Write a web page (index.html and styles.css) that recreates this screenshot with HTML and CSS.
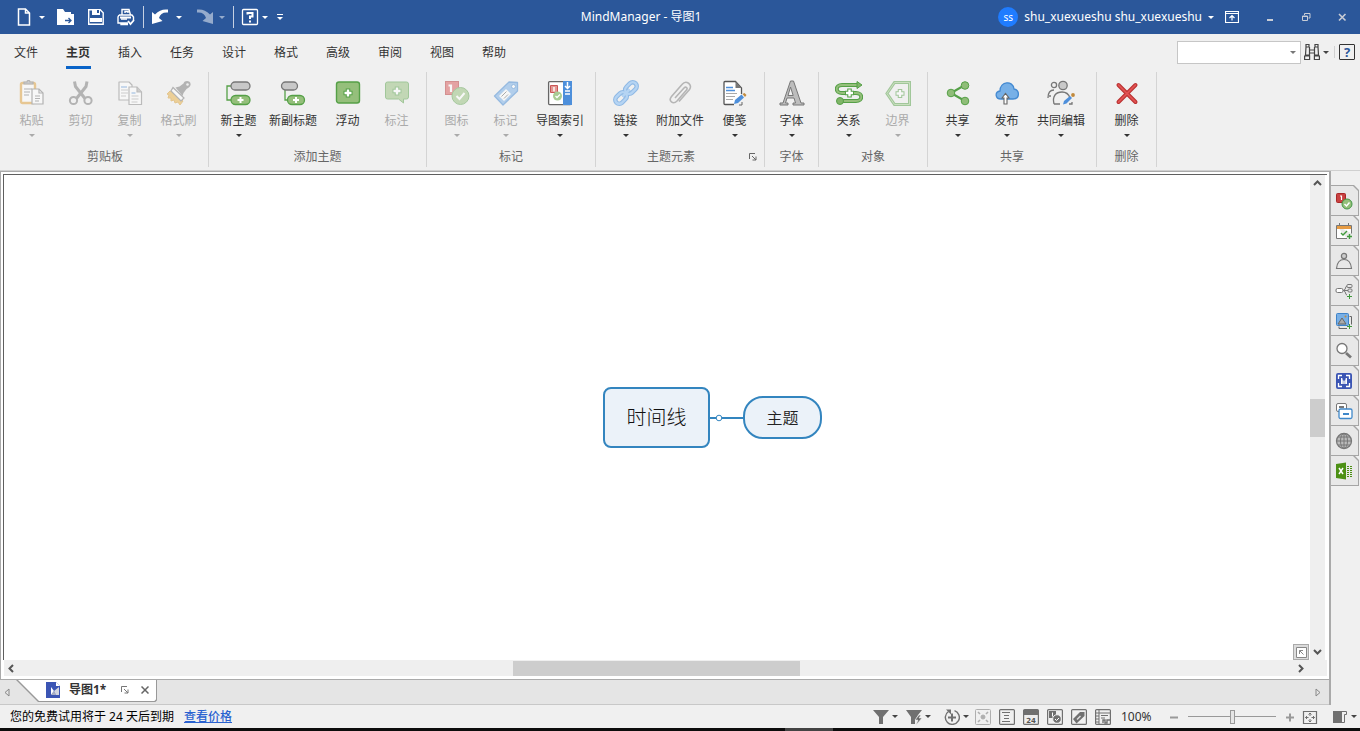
FILE: index.html
```html
<!DOCTYPE html>
<html lang="zh-CN">
<head>
<meta charset="utf-8">
<title>MindManager - 导图1</title>
<link rel="stylesheet" href="styles.css">
</head>
<body>
<header class="titlebar">
  <div class="quick">
    <button class="qbtn" aria-label="新建"><svg width="14" height="18" viewBox="0 0 14 18" fill="none" stroke="#fff" stroke-width="1.5"><path d="M1.500 1h7l4 4v12h-11zM8.500 1v4h4"/></svg><i class="caret"></i></button>
    <button class="qbtn" aria-label="打开"><svg width="18" height="18" viewBox="0 0 18 18"><path fill="#fff" d="M0 1h6l2 3h6v3H0z"/><path d="M0 6h17v11H0z" fill="#fff"/><path d="M8 12.500h6M11.500 10l2.500 2.500-2.500 2.500" fill="none" stroke="#2b579a" stroke-width="1.300"/></svg></button>
    <button class="qbtn" aria-label="保存"><svg width="18" height="18" viewBox="0 0 18 18"><path d="M1.700 1.700h11.500l3 3v11.500H1.700z" fill="none" stroke="#fff" stroke-width="1.400"/><path fill="#fff" d="M5 2h8v5H5zM3 10h12v4H3z"/><path fill="#2b579a" d="M10 2h2v3h-2z"/></svg></button>
    <button class="qbtn" aria-label="打印"><svg width="18" height="18" viewBox="0 0 18 18" fill="none" stroke="#fff" stroke-width="1.400"><path d="M5 7V1.500h7L13.500 7M8 5V3.500h3V5M2 7h13l1.500 2v3M2 7L1 9v6h10M4 11h6M4 15v1.500h7"/><path d="M3 9.500h11M11 13l2.500 3 3.500-4" stroke-width="1.800"/></svg></button>
    <span class="qsep"></span>
    <button class="qbtn q-step" aria-label="撤消"><svg width="20" height="18" viewBox="0 0 20 18"><path fill="#fff" d="M1 4l3 2.500C8 2 12 1 17 1.500v3C12 4 9 6 8 10l3.500 3L1 16z"/></svg><i class="caret"></i></button>
    <button class="qbtn q-step q-redo" aria-label="恢复" disabled><svg width="20" height="18" viewBox="0 0 20 18"><path fill="#fff" d="M19 4l-3 2.500C12 2 8 1 3 1.500v3C8 4 11 6 12 10l-3.500 3L19 16z"/></svg><i class="caret"></i></button>
    <span class="qsep"></span>
    <button class="qbtn q-help" aria-label="帮助"><svg width="18" height="18" viewBox="0 0 18 18" fill="none" stroke="#fff"><rect x="1.500" y="1.500" width="15" height="15" rx="1" stroke-width="1.300"/><path d="M6.500 6.500V5h5v3.500H9V11" stroke-width="2"/><path d="M8 12.500h2v2H8z" fill="#fff" stroke="none"/></svg><i class="caret"></i></button>
    <button class="qbtn q-more" aria-label="自定义"><span class="bar"></span><i class="caret"></i></button>
  </div>
  <div class="apptitle">MindManager - 导图1</div>
  <div class="account">
    <button class="user"><span class="avatar">ss</span><span>shu_xuexueshu shu_xuexueshu</span><i class="caret"></i></button>
    <button class="winbtn bright" aria-label="功能区选项"><svg width="14" height="12" viewBox="0 0 14 12" fill="none" stroke="#fff"><path d="M.5.5h13v11H.5zM.5 2.500h13M7 9.500V5M4.500 7L7 4.500 9.500 7" stroke-width="1.200"/></svg></button>
    <button class="winbtn" aria-label="最小化"><svg width="10" height="10" viewBox="0 0 10 10"><path fill="#c9cdd6" d="M2 7h6v2H2z"/></svg></button>
    <button class="winbtn" aria-label="还原"><svg width="10" height="10" viewBox="0 0 10 10" fill="none" stroke="#c9cdd6"><path d="M1.500 4h5v4.500h-5zM1 4.500h6M3.500 3V1.500H9V6H7.500"/></svg></button>
    <button class="winbtn" aria-label="关闭"><svg width="10" height="10" viewBox="0 0 10 10" stroke="#c9cdd6" stroke-width="1.600"><path d="M2 2l6.500 6.500M8.500 2L2 8.500"/></svg></button>
  </div>
</header>

<nav class="menubar">
  <button class="mtab">文件</button><button class="mtab active">主页</button><button class="mtab">插入</button><button class="mtab">任务</button><button class="mtab">设计</button><button class="mtab">格式</button><button class="mtab">高级</button><button class="mtab">审阅</button><button class="mtab">视图</button><button class="mtab">帮助</button>
  <div class="find">
    <label class="findbox"><input type="text" aria-label="查找"><i class="caret"></i></label>
    <button class="findbtn" aria-label="查找"><svg width="16" height="18" viewBox="0 0 16 18" fill="none" stroke="#444" stroke-width="1.200"><path d="M2 1.500h3v2.500H2zM11 1.500h3v2.500h-3zM2 4l-.5 8h4V4M14 4l.5 8h-4V4M.6 13h5v3.500h-5zM10.400 13h5v3.500h-5zM5.500 7h5M5.500 10h5"/></svg><i class="caret"></i></button>
    <span class="fsep"></span>
    <button class="findhelp" aria-label="帮助">?</button>
  </div>
</nav>

<section class="ribbon">
  <div class="group">
    <div class="tools">
      <button class="tool" disabled><svg viewBox="0 0 26 26" fill="none" stroke="#777" stroke-width="1.200"><rect x="2" y="3" width="14" height="20" rx="1.500" fill="#fff" stroke="#e0a038" stroke-width="2.400"/><path d="M5 4V2h3c0-2 3-2 3 0h3v2z" fill="#aaa"/><path d="M5 9h8M5 12h6M5 15h5"/><path d="M13 9h7l4 4v11H13z" fill="#fff"/><path d="M20 9v4h4M16 16h5M16 18.500h5M16 21h4"/></svg><span>粘贴</span><i class="caret"></i></button>
      <button class="tool" disabled><svg viewBox="0 0 26 26" fill="none" stroke="#777"><path d="M6.500 1.500l1 5 9.500 12M19 1.500l-1 5L8.500 18.500" stroke-width="3"/><circle cx="5.500" cy="20.500" r="3.600" stroke-width="2"/><circle cx="20" cy="20.500" r="3.600" stroke-width="2"/></svg><span>剪切</span></button>
      <button class="tool" disabled><svg viewBox="0 0 26 26" fill="#fff" stroke="#888" stroke-width="1.200"><path d="M2 2h10l3 3v15H2z" stroke-linejoin="round"/><path d="M4 7h6" stroke="#5b95d8"/><path d="M4 10h7M4 13h7M4 16h5" stroke="#aaa"/><path d="M12 7h8l4.500 5v12.500H12z"/><path d="M20 7v5h4.500" fill="#aaa"/><path d="M14.500 13h4" stroke="#5b95d8"/><path d="M14.500 16h7M14.500 19h7M14.500 22h6" stroke="#aaa"/></svg><span>复制</span><i class="caret"></i></button>
      <button class="tool" disabled><svg viewBox="0 0 26 26"><path d="M4 11l-3 3 2 1-1 3 3 0 0 3 3-1 1 3 3-1 2 3 3-4z" fill="#e9b040" stroke="#d79b30"/><path d="M7 7.500L18 18l-3 3L5 11z" fill="#fff" stroke="#777" stroke-width="1.200"/><path d="M9.500 7.500l4-1 4-3c1-4 8-3 7 1.500-1 3-3 3-4 4l-3 4-1 3z" fill="#777"/><circle cx="21.500" cy="4.500" r="1.300" fill="#eee"/></svg><span>格式刷</span><i class="caret"></i></button>
    </div>
    <div class="gname">剪贴板</div>
  </div>
  <div class="group">
    <div class="tools">
      <button class="tool"><svg viewBox="0 0 26 26" fill="none" stroke-width="1.300"><path d="M5 6H1v14h5" stroke="#55a047"/><rect x="5" y="2" width="19" height="8" rx="4" fill="#c8c8c8" stroke="#777"/><rect x="5" y="15.500" width="19" height="9" rx="4.500" fill="#95bf7b" stroke="#55a047"/><path d="M14.500 17v6M11.500 20h6" stroke="#fff" stroke-width="2"/></svg><span>新主题</span><i class="caret"></i></button>
      <button class="tool wide"><svg viewBox="0 0 26 26" fill="none" stroke-width="1.300"><path d="M5 10v10h5" stroke="#55a047"/><rect x="1.500" y="2" width="16" height="8" rx="4" fill="#c8c8c8" stroke="#777"/><rect x="7.500" y="15.500" width="17" height="9" rx="4.500" fill="#95bf7b" stroke="#55a047"/><path d="M16 17v6M13 20h6" stroke="#fff" stroke-width="2"/></svg><span>新副标题</span></button>
      <button class="tool"><svg viewBox="0 0 26 26"><rect x="1.500" y="2" width="23" height="21" rx="2.500" fill="#95bf7b" stroke="#55a047" stroke-width="1.400"/><path d="M13 8.500v9M8.500 13h9" stroke="#55a047" stroke-width="4.500"/><path d="M13 9.500v7M9.500 13h7" stroke="#fff" stroke-width="2.400"/></svg><span>浮动</span></button>
      <button class="tool" disabled><svg viewBox="0 0 26 26"><path d="M3.500 2h19q2 0 2 2v13q0 2-2 2h-3v4l-5-4h-11q-2 0-2-2V4q0-2 2-2z" fill="#95bf7b" stroke="#55a047"/><path d="M13 6.500v9M8.500 11h9" stroke="#55a047" stroke-width="4.500"/><path d="M13 7.500v7M9.500 11h7" stroke="#fff" stroke-width="2.400"/></svg><span>标注</span></button>
    </div>
    <div class="gname">添加主题</div>
  </div>
  <div class="group">
    <div class="tools">
      <button class="tool" disabled><svg viewBox="0 0 26 26"><rect x="1.500" y="1.500" width="13" height="13" fill="#d95757" stroke="#b83232"/><path d="M4.500 5.500H7V12" stroke="#fff" stroke-width="2.200" fill="none"/><circle cx="16.500" cy="16" r="8.500" fill="#94c07a" stroke="#5ca04e"/><path d="M12.500 16l3 3 5-6" fill="none" stroke="#fff" stroke-width="2"/></svg><span>图标</span><i class="caret"></i></button>
      <button class="tool" disabled><svg viewBox="0 0 26 26"><path d="M1.500 16L16 2l8.500.5V11L10 25z" fill="#76aee8" stroke="#3f86d2" stroke-width="1.300" stroke-linejoin="round"/><path d="M6 16l7-7 5 5-7 7z" fill="#fff"/><path d="M8.500 16.500l5-5M11 18.500l4-4" stroke="#666"/><circle cx="20.500" cy="6.500" r="2" fill="#fff" stroke="#3f86d2"/></svg><span>标记</span><i class="caret"></i></button>
      <button class="tool wide"><svg viewBox="0 0 26 26"><rect x="1.600" y="1.600" width="22.500" height="23" rx="1" fill="#fff" stroke="#666" stroke-width="1.300"/><path fill="#4d8fdb" d="M16 1h9v24h-9z"/><path d="M20.500 2v6M18 6l2.500 2.500L23 6M18 11h5M18 14h5" stroke="#fff" stroke-width="1.500" fill="none"/><path fill="#e39793" stroke="#ca5555" d="M3.500 5.500h7v7h-7z"/><path d="M7 7v4.500" stroke="#fff" stroke-width="1.400"/><circle cx="10.500" cy="16" r="4.500" fill="#a8cc94"/><path d="M8.500 16l1.500 1.500 3-3" fill="none" stroke="#fff" stroke-width="1.300"/></svg><span>导图索引</span><i class="caret"></i></button>
    </div>
    <div class="gname">标记</div>
  </div>
  <div class="group">
    <div class="tools">
      <button class="tool"><svg viewBox="0 0 26 26" fill="none"><g transform="rotate(-45 13 13)" stroke="#8fb9e5" stroke-width="4.500"><rect x="-.5" y="9" width="13" height="8" rx="4"/><rect x="13.500" y="9" width="13" height="8" rx="4"/><path d="M8 13h10" stroke-width="3.500"/></g><g transform="rotate(-45 13 13)" stroke="#b5d4f3" stroke-width="2.400"><rect x="-.5" y="9" width="13" height="8" rx="4"/><rect x="13.500" y="9" width="13" height="8" rx="4"/><path d="M8 13h10"/></g></svg><span>链接</span><i class="caret"></i></button>
      <button class="tool wide"><svg viewBox="0 0 26 26" fill="none" stroke="#b5b5b5" stroke-width="1.600"><path d="M8 18l9-10c2-2 4 0 2.500 2L10 21c-4 4-9 0-5.500-4.500L15 4.500c4-5 11 0 7.500 5L12 21.500"/></svg><span>附加文件</span><i class="caret"></i></button>
      <button class="tool"><svg viewBox="0 0 26 26" fill="none"><path d="M12 24.500H3q-1 0-1-1v-21q0-1 1-1h10.500L19.500 8v6" fill="#fff" stroke="#555" stroke-width="1.300"/><path d="M13.500 1.500V8h6z" fill="#777"/><path d="M4 7.500h7M4 10.500h9" stroke="#4d8fdb" stroke-width="1.400"/><path d="M4 13.500h11M4 16.500h9M4 19.500h7" stroke="#aaa"/><path d="M12 24l1-4 6.500-5.500 2.500 3-6 5.500z" fill="#4d8fdb"/><path d="M20.500 14l2-1 2 2-1.500 2z" fill="#c18a3d"/><path d="M20 22v3h-3" stroke="#666"/></svg><span>便笺</span><i class="caret"></i></button>
    </div>
    <div class="gname with-launcher">主题元素<button class="launcher" aria-label="更多选项"><svg width="8" height="8" viewBox="0 0 8 8" fill="none" stroke="#666"><path d="M.5 6V.5H6M3 3l4 4M7 3.500V7H3.500"/></svg></button></div>
  </div>
  <div class="group narrow">
    <div class="tools">
      <button class="tool"><svg viewBox="0 0 26 26"><path d="M11.500 1h3L22 23h3v2H14v-2h2.500L15 18H8l-1.500 5H9v2H1v-2h3z M11.500 7L9 15.500h5.200z" fill="#bdbdbd" fill-rule="evenodd" stroke="#777"/></svg><span>字体</span><i class="caret"></i></button>
    </div>
    <div class="gname">字体</div>
  </div>
  <div class="group">
    <div class="tools">
      <button class="tool"><svg class="rel" viewBox="0 0 28 26" fill="none"><path d="M22 5H7C0 5 0 13 7 13h14c7 0 7 8 0 8H6" stroke="#55a047" stroke-width="4"/><path d="M22 5H7C0 5 0 13 7 13h14c7 0 7 8 0 8H6" stroke="#95bf7b" stroke-width="1.800"/><path d="M22 1.500l5 3.500-5 3.500zM5 17.500a3.500 3.500 0 1 1 0 7 3.500 3.500 0 0 1 0-7z" fill="#80b568" stroke="#55a047"/><path d="M14.500 8.500v9M10 13h9" stroke="#55a047" stroke-width="4.500"/><path d="M14.500 9.500v7M11 13h7" stroke="#fff" stroke-width="2.400"/></svg><span>关系</span><i class="caret"></i></button>
      <button class="tool" disabled><svg viewBox="0 0 26 26" fill="none"><path d="M9.500 2.500h15v22h-15L2 13.500z" stroke="#55a047" stroke-width="3"/><path d="M9.500 2.500h15v22h-15L2 13.500z" stroke="#a6cf91"/><path d="M15 9v9M10.500 13.500h9" stroke="#55a047" stroke-width="4.500"/><path d="M15 10v7M11.500 13.500h7" stroke="#fff" stroke-width="2.400"/></svg><span>边界</span><i class="caret"></i></button>
    </div>
    <div class="gname">对象</div>
  </div>
  <div class="group">
    <div class="tools">
      <button class="tool"><svg viewBox="0 0 26 26"><path d="M20 5L6 13l14 8" fill="none" stroke="#55a047" stroke-width="2.200"/><g fill="#8fbd78" stroke="#55a047"><circle cx="20" cy="5.500" r="3.800"/><circle cx="6" cy="13" r="3.800"/><circle cx="20" cy="21" r="3.800"/></g></svg><span>共享</span><i class="caret"></i></button>
      <button class="tool"><svg viewBox="0 0 26 26"><path d="M7 19C1 19 .5 12 6 11c0-10 13-11 14-2 6 1 6 10-1 10z" fill="#77b0e7" stroke="#4389d1" stroke-width="1.300"/><path d="M8 18l3.500-4.500L15 18h-2v6h-3v-6z" fill="#fff" stroke="#666" stroke-width="1.100"/></svg><span>发布</span><i class="caret"></i></button>
      <button class="tool wide"><svg class="rel" viewBox="0 0 28 26" fill="none" stroke="#777" stroke-width="1.300"><circle cx="7" cy="5" r="2.600"/><path d="M1 18c0-5 2-8 6-8M2 16h2"/><circle cx="16" cy="5.500" r="4.200" fill="#c9c9c9"/><path d="M7 24c-2-8 2-12 8-12 5 0 7 3 8 6M7 24h6M22 24h3v-2"/><path d="M16 24.500l1-3.500 6-5 2 2-5.500 5.500z" fill="#4d8fdb" stroke="none"/><circle cx="26" cy="15" r="1.900" fill="#c18a3d" stroke="none"/></svg><span>共同编辑</span><i class="caret"></i></button>
    </div>
    <div class="gname">共享</div>
  </div>
  <div class="group">
    <div class="tools">
      <button class="tool"><svg viewBox="0 0 26 26" fill="none" stroke-linecap="round"><path d="M4.500 5l17 17M21.500 5l-17 17" stroke="#b93030" stroke-width="4"/><path d="M4.500 5l17 17M21.500 5l-17 17" stroke="#e05252" stroke-width="1.800"/></svg><span>删除</span><i class="caret"></i></button>
    </div>
    <div class="gname">删除</div>
  </div>
</section>

<main class="work">
  <div class="docarea">
    <div class="frame">
      <div class="viewport">
        <div class="canvas">
          <div class="node root">时间线</div>
          <svg class="link" width="36" height="8" viewBox="0 0 36 8"><path d="M0 4h36" stroke="#3385bf" stroke-width="2"/><circle cx="10" cy="4" r="2.800" fill="#fff" stroke="#3385bf"/></svg>
          <div class="node topic">主题</div>
          <button class="corner" aria-label="导航"><svg width="11" height="11" viewBox="0 0 11 11" fill="#fff" stroke="#888"><path d="M.5.500h10v10H.5zM3.500 7V3.500H7M3.500 3.500l4 4"/></svg></button>
        </div>
        <div class="vscroll">
          <svg width="9" height="9" viewBox="0 0 9 9" fill="none" stroke="#555" stroke-width="2"><path d="M1 6l3.500-3.500L8 6"/></svg>
          <span class="vthumb"></span>
          <svg width="9" height="9" viewBox="0 0 9 9" fill="none" stroke="#555" stroke-width="2"><path d="M1 3l3.500 3.500L8 3"/></svg>
        </div>
      </div>
      <div class="hscroll">
        <svg width="9" height="9" viewBox="0 0 9 9" fill="none" stroke="#555" stroke-width="2"><path d="M6 1L2.500 4.500 6 8"/></svg>
        <span class="hthumb"></span>
        <svg width="9" height="9" viewBox="0 0 9 9" fill="none" stroke="#555" stroke-width="2"><path d="M3 1l3.500 3.500L3 8"/></svg>
      </div>
    </div>
    <div class="doctabs">
      <svg class="arrow" width="6" height="9" viewBox="0 0 6 9" fill="none" stroke="#888"><path d="M5 1v7L1 4.500z"/></svg>
      <div class="doctab">
        <svg width="14" height="16" viewBox="0 0 14 16"><path fill="#3b55b4" d="M0 0h10l4 4v12H0z"/><path fill="#fff" d="M10 0l4 4h-4z"/><path fill="#fff" d="M5 5l3 4-3 4z"/><path fill="#a9b0c4" d="M5 13l3-4 2 4z"/><path fill="#d3d6df" d="M8 9l5-4v8h-3z"/></svg>
        <span>导图1*</span>
        <button class="mini" aria-label="浮动窗口"><svg width="8" height="8" viewBox="0 0 8 8" fill="none" stroke="#777"><path d="M.5 6V.5H6M3 3l4 4M7 3.500V7H3.500"/></svg></button>
        <button class="mini" aria-label="关闭导图"><svg width="8" height="8" viewBox="0 0 8 8" stroke="#666" stroke-width="1.500"><path d="M.5.500l7 7M7.500.5l-7 7"/></svg></button>
      </div>
      <svg class="arrow end" width="6" height="9" viewBox="0 0 6 9" fill="none" stroke="#888"><path d="M1 1v7l4-3.500z"/></svg>
    </div>
  </div>
  <aside class="side">
    <button class="stab" aria-label="标记"><svg viewBox="0 0 18 18"><rect x="1.500" y="1.500" width="9" height="9" rx="1" fill="#c94141" stroke="#a92828"/><path d="M5 4h1.500v4" stroke="#fff" stroke-width="1.200" fill="none"/><circle cx="12" cy="12" r="5" fill="#94c07a" stroke="#439746"/><path d="M9.500 12l2 2 3-3.500" fill="none" stroke="#fff" stroke-width="1.500"/></svg></button>
    <button class="stab" aria-label="任务信息"><svg viewBox="0 0 18 18" fill="none"><path d="M1.500 3.500h15v8M12 16.500H1.500v-13" fill="#fff" stroke="#777"/><path d="M2 4h14v3H2z" fill="#e79c44"/><path d="M4.500 1v3M13.500 1v3" stroke="#777"/><path d="M6 11l2 2 4-4M14.500 12v5M12 14.500h5" stroke="#419a3c" stroke-width="1.400"/></svg></button>
    <button class="stab" aria-label="资源"><svg viewBox="0 0 18 18" fill="none" stroke="#777" stroke-width="1.200"><circle cx="9" cy="4" r="2.600" fill="#ccc"/><path d="M1.500 16.500C2 11 4 7.500 9 7.500s7 3.500 7.500 9z"/></svg></button>
    <button class="stab" aria-label="导图部件"><svg viewBox="0 0 18 18" fill="none" stroke="#777"><rect x="1" y="6.500" width="7" height="4" rx="1.500" fill="#fff"/><path d="M8 8.500h5M9 8c2 0 1-4 3-4M9 9c2 0 1 4 3 4"/><rect x="12" y="2.500" width="5" height="3" rx="1"/><rect x="13" y="7" width="4" height="3" rx="1"/><path d="M14.500 12v5M12 14.500h5" stroke="#419a3c"/></svg></button>
    <button class="stab" aria-label="图库"><svg viewBox="0 0 18 18" fill="none" stroke="#666"><path d="M4 14.500v2h8M14.500 4.500h2v8"/><rect x="1.500" y="1.500" width="12" height="12" rx="1" fill="#78afe5" stroke="#3e83c9"/><path d="M3 12l4-6 4 6z" fill="#aaa"/><circle cx="10.500" cy="4.500" r="1" fill="#c18a3d" stroke="none"/><path d="M14.500 12v5M12 14.500h5" stroke="#419a3c"/></svg></button>
    <button class="stab" aria-label="搜索"><svg viewBox="0 0 18 18" fill="none" stroke="#777"><circle cx="7" cy="6.500" r="5" fill="#fff" stroke-width="1.300"/><path d="M11 11l5 4.500" stroke-width="2.800"/></svg></button>
    <button class="stab" aria-label="SmartRules"><svg viewBox="0 0 18 18" fill="none" stroke="#fff" stroke-width="1.300"><rect x="1" y="1" width="16" height="16" rx="2" fill="#3b55b4" stroke="none"/><path d="M3.500 7V3.500H7M11 3.500h3.500V7M14.500 11v3.500H11M7 14.500H3.500V11"/><path d="M6 6l3 3 3-3v6H6z" fill="#c4cbe6" stroke="none"/><path d="M6.700 6v6M11.300 6v6"/></svg></button>
    <button class="stab" aria-label="我的导图"><svg viewBox="0 0 18 18" fill="#fff"><rect x="1.500" y="1.500" width="10" height="8" rx="1.500" stroke="#777"/><path d="M4 4h5v2H4z" fill="#777"/><rect x="4" y="7" width="13" height="9.500" rx="1.500" stroke="#3f88ca" stroke-width="1.300"/><path d="M8 11h6v2H8z" fill="#3f88ca"/></svg></button>
    <button class="stab" aria-label="浏览器"><svg viewBox="0 0 18 18" fill="none" stroke="#777"><circle cx="9" cy="9" r="7.500" fill="#bbb" stroke-width="1.300"/><ellipse cx="9" cy="9" rx="3.500" ry="7.500"/><path d="M9 1.500v15M1.500 9h15M3 5h12M3 13h12"/></svg></button>
    <button class="stab" aria-label="Excel"><svg viewBox="0 0 18 18"><path fill="#4c9014" d="M1 2l10-1.500v17L1 16z"/><path d="M4 6l4 6M8 6l-4 6" stroke="#fff" stroke-width="1.500"/><path d="M13 4v11M16 4v11" stroke="#4c9014" stroke-width="2" stroke-dasharray="1 1"/></svg></button>
  </aside>
</main>

<footer class="status">
  <span class="trial">您的免费试用将于 24 天后到期</span>
  <a class="price" href="#">查看价格</a>
  <div class="viewtools">
    <button class="sbtn" aria-label="筛选"><svg viewBox="0 0 16 16"><path fill="#707070" d="M0 1h16l-6 7v7H6V8z"/></svg><i class="caret"></i></button>
    <button class="sbtn filters" aria-label="快速筛选"><svg viewBox="0 0 16 16"><path fill="#707070" d="M0 1h16l-4 5-3 5v4H5V8z"/><path d="M13 6l-4 5h3l-2 5 6-7h-3l2-3z" fill="#666" stroke="#f0f0f0" stroke-width=".6"/></svg><i class="caret"></i></button>
    <button class="sbtn levels" aria-label="显示级别"><svg viewBox="0 0 16 16" fill="none" stroke="#707070"><path d="M4.500 2.500a7 7 0 1 0 6-.8" stroke-width="1.400"/><path d="M8 4.500v8M4 8.500h8" stroke-width="2"/><path d="M2 .5h5v5z" fill="#707070" stroke="none"/></svg><i class="caret"></i></button>
    <button class="sbtn" aria-label="导图视图" disabled><svg viewBox="0 0 16 16" fill="none" stroke="#707070"><rect x=".5" y=".5" width="15" height="15" rx="1"/><path d="M3 3l2 2M13 3l-2 2M3 13l2-2M13 13l-2-2" stroke-width="1.600"/><circle cx="8" cy="8" r="2" fill="#707070"/></svg></button>
    <button class="sbtn" aria-label="大纲"><svg viewBox="0 0 16 16" fill="none" stroke="#707070"><rect x=".6" y=".6" width="14.800" height="14.800" rx="1" stroke-width="1.200"/><path d="M3 3.500h8M5 6.500h5M5 9.500h5M3 12.500h8"/></svg></button>
    <button class="sbtn" aria-label="日程"><svg viewBox="0 0 16 16"><rect x=".6" y=".6" width="14.800" height="14.800" rx="1" fill="#eee" stroke="#707070" stroke-width="1.200"/><path fill="#707070" d="M1 1h14v5H1z"/><text x="8" y="13.500" text-anchor="middle" class="cal">24</text></svg></button>
    <button class="sbtn" aria-label="图标视图"><svg viewBox="0 0 16 16" fill="none"><rect x=".6" y=".6" width="14.800" height="14.800" rx="1" stroke="#707070" stroke-width="1.200"/><path fill="#707070" d="M2 2h7v7H2z"/><path d="M5.500 3.500v4" stroke="#fff"/><circle cx="10" cy="10" r="4.300" fill="#707070" stroke="#f0f0f0"/><path d="M8 10l1.500 1.500L12 9" stroke="#fff"/></svg></button>
    <button class="sbtn" aria-label="标记视图"><svg viewBox="0 0 16 16" fill="none"><rect x=".6" y=".6" width="14.800" height="14.800" rx="1" stroke="#707070" stroke-width="1.200"/><path fill="#707070" d="M2 10l7-7h4.500v4l-8 7.500z"/><path d="M5.500 10l3.500-3.500 1 1-3.500 3.500z" fill="#ddd"/></svg></button>
    <button class="sbtn" aria-label="甘特图"><svg viewBox="0 0 16 16" fill="none" stroke="#707070"><rect x=".6" y=".6" width="14.800" height="14.800" rx="1" stroke-width="1.200"/><path d="M4 1v14M1 4h14M6 6.500h7M6 9h4M1 7h3M1 10h3M1 13h3"/><path d="M8 14v-3h2v3h2v-3h3" stroke-width="1.400"/></svg></button>
  </div>
  <span class="percent">100%</span>
  <button class="zbtn" aria-label="缩小"><svg viewBox="0 0 16 16"><path d="M4 8.500h8" stroke="#999" stroke-width="2"/></svg></button>
  <input class="zoom" type="range" min="0" max="200" value="100" aria-label="缩放">
  <button class="zbtn" aria-label="放大"><svg viewBox="0 0 16 16"><path d="M4 8.500h8M8 4.500v8" stroke="#999" stroke-width="2"/></svg></button>
  <button class="zbtn fit" aria-label="适合窗口"><svg viewBox="0 0 16 16" fill="none" stroke="#707070"><path d="M1.500 2.500h13v12h-13z" stroke-width="1.200"/><path d="M8 4v3M8 10v3M3.500 8.500h3M9.500 8.500h3M6.500 5.500L8 4l1.500 1.500M6.500 11.500L8 13l1.500-1.500M5 7L3.500 8.500 5 10M11 7l1.500 1.500L11 10"/></svg></button>
  <button class="sbtn" aria-label="任务窗格"><svg viewBox="0 0 16 16"><path fill="#707070" d="M1 2h9v12H1z"/><path d="M10 2.500h4.500v3h-2v8H10" fill="none" stroke="#707070"/></svg><i class="caret"></i></button>
</footer>
<div class="taskedge"></div>
</body>
</html>
```
FILE: styles.css
```css
* { box-sizing: border-box; }
body {
  margin: 0;
  height: 100vh;
  display: flex;
  flex-direction: column;
  overflow: hidden;
  background: #f0f0f0;
  color: #333;
  font: 12px/16px "Noto Sans", "Noto Sans CJK SC", sans-serif;
}
button, input { font: inherit; color: inherit; }
button {
  border: 0;
  padding: 0;
  background: none;
  display: flex;
  align-items: center;
  justify-content: center;
}
svg { display: block; flex: none; }
.caret {
  flex: none;
  width: 0;
  height: 0;
  border: 3px solid transparent;
  border-top-color: currentColor;
  border-bottom: 0;
}

/* Title bar */
.titlebar {
  flex: none;
  height: 34px;
  display: flex;
  align-items: center;
  background: #2b579a;
  color: #fff;
}
.quick { width: 284px; display: flex; align-items: center; gap: 12px; padding-left: 17px; }
.qbtn { gap: 8px; flex: none; }
.q-step { gap: 5px; }
.q-redo { opacity: .5; color: #fff; }
.qsep { flex: none; width: 1px; height: 22px; background: #c5d0e2; margin: 0 -4px; }
.qsep + .qbtn { margin-left: -1px; }
.q-help { gap: 3px; }
.q-more { flex-direction: column; gap: 2px; margin-left: -3px; }
.bar { width: 6px; height: 1px; background: #fff; }
.apptitle { flex: 1; text-align: center; }
.account { display: flex; align-items: center; }
.user { gap: 6px; }
.avatar {
  width: 20px;
  height: 20px;
  border-radius: 50%;
  background: #1f7cff;
  font-size: 10px;
  line-height: 20px;
  text-align: center;
}
.winbtn { width: 36px; height: 34px; }
.bright { margin-right: 2px; }

/* Menu */
.menubar { flex: none; height: 36px; display: flex; align-items: stretch; }
.mtab { width: 52px; position: relative; padding-top: 2px; }
.active { font-weight: 700; color: #333; }
.active::after {
  content: "";
  position: absolute;
  left: 14px;
  right: 13px;
  bottom: 1px;
  height: 3px;
  background: #0a64c8;
}
.find { margin-left: auto; display: flex; align-items: center; padding-right: 5px; }
.findbox {
  width: 124px;
  height: 23px;
  display: flex;
  align-items: center;
  padding-right: 4px;
  border: 1px solid #c6c6c6;
  background: #fff;
  color: #777;
}
.findbox input { flex: 1; min-width: 0; border: 0; outline: 0; background: none; }
.findbtn { margin-left: 3px; gap: 3px; color: #444; }
.fsep { width: 1px; height: 12px; margin: 0 4px 0 5px; background: #d0d0d0; }
.findhelp {
  width: 16px;
  height: 16px;
  border: 1px solid #333;
  border-radius: 1px;
  color: #2b579a;
  font-size: 13px;
  font-weight: 700;
}

/* Ribbon */
.ribbon { flex: none; height: 101px; display: flex; padding: 2px 0; border-bottom: 1px solid #d0d0d0; }
.group {
  display: flex;
  flex-direction: column;
  padding: 8px 5px 0;
  height: 95px;
  border-right: 1px solid #d4d4d4;
}
.group:first-child { padding-left: 7px; }
.narrow { padding-left: 2px; padding-right: 2px; }
.tools { display: flex; height: 69px; }
.tool {
  width: 49px;
  flex-direction: column;
  justify-content: flex-start;
  color: #333;
}
.wide { width: 60px; }
.tool svg { width: 26px; height: 26px; margin-bottom: 7px; }
.tool svg.rel { width: 28px; }
.tool span { white-space: nowrap; }
.tool .caret { margin-top: 5px; }
.tool:disabled { color: #aaa; }
.tool:disabled svg { opacity: .5; }
.gname { position: relative; text-align: center; color: #666; }
.with-launcher { padding-right: 18px; }
.launcher { position: absolute; right: 2px; top: 4px; }

/* Work area */
.work { flex: 1; min-height: 0; display: flex; }
.docarea {
  flex: 1;
  min-width: 0;
  display: flex;
  flex-direction: column;
  border-right: 2px solid #aaa;
}
.frame {
  flex: 1;
  min-height: 0;
  display: flex;
  flex-direction: column;
  padding: 2px 2px 3px;
  border: 1px solid #aaa;
  border-right: 0;
  background: #fff;
}
.viewport {
  flex: 1;
  min-height: 0;
  display: flex;
  border: 1px solid #5f5f5f;
  border-width: 1px 0 0 1px;
}
.canvas { flex: 1; position: relative; overflow: hidden; background: #fff; }
.node {
  position: absolute;
  display: flex;
  align-items: center;
  justify-content: center;
  border: 2px solid #3385bf;
  background: #ebf2f9;
}
.root { left: 599px; top: 212px; width: 107px; height: 61px; border-radius: 8px; font-size: 20px; font-weight: 300; color: #111; }
.topic { left: 739px; top: 221px; width: 79px; height: 43px; border-radius: 20px; font-size: 16px; font-weight: 350; color: #222; }
.link { position: absolute; left: 705px; top: 239px; }
.corner {
  position: absolute;
  right: 1px;
  bottom: 0;
  width: 16px;
  height: 16px;
  border: 1px solid #aaa;
  background: #dcdcdc;
}
.vscroll {
  width: 15px;
  margin-right: 2px;
  display: flex;
  flex-direction: column;
  align-items: center;
  padding: 4px 0;
  background: #efefef;
}
.vthumb { width: 15px; height: 38px; margin: auto 0; background: #cdcdcd; }
.hscroll {
  height: 16px;
  display: flex;
  align-items: center;
  justify-content: space-between;
  margin-left: 1px;
  padding: 0 22px 0 3px;
  background: #efefef;
}
.hthumb { width: 287px; height: 15px; background: #cdcdcd; }
.doctabs {
  flex: none;
  height: 25px;
  display: flex;
  align-items: flex-start;
  background: #e5e5e5;
  border-bottom: 1px solid #c8c8c8;
}
.arrow { margin: 8px 6px 0 4px; }
.end { margin: 8px 8px 0 auto; }
.doctab {
  position: relative;
  isolation: isolate;
  height: 22px;
  display: flex;
  align-items: center;
  gap: 9px;
  padding: 0 8px 2px 30px;
  background: #999;
  font-weight: 700;
  clip-path: polygon(0 0, 100% 0, 100% 20px, calc(100% - 2px) 100%, 22px 100%);
}
.doctab::before {
  content: "";
  position: absolute;
  z-index: -1;
  inset: 0 1px 1px 0;
  background: #fff;
  clip-path: polygon(2px 0, 100% 0, 100% 19px, calc(100% - 2px) 100%, 23px 100%);
}
.doctab span { margin-right: 6px; }
.mini + .mini { margin-left: 3px; }
.side { width: 29px; padding: 14px 1px 0 0; }
.stab {
  position: relative;
  isolation: isolate;
  width: 28px;
  height: 31px;
  margin-bottom: -1px;
  background: #a5a5a5;
  clip-path: polygon(0 0, 23px 0, 100% 5px, 100% 100%, 0 100%);
}
.stab::before {
  content: "";
  position: absolute;
  z-index: -1;
  inset: 1px 1px 1px 0;
  background: #e8e8e8;
  clip-path: polygon(0 0, 22px 0, 100% 5px, 100% 100%, 0 100%);
}
.stab svg { width: 18px; height: 18px; margin-right: 2px; }

/* Status bar */
.status { flex: none; height: 23px; display: flex; align-items: center; padding: 0 3px 0 10px; }
.trial { color: #000; white-space: nowrap; }
.price { margin-left: 10px; color: #2a62d0; font-weight: 500; white-space: nowrap; }
.viewtools { margin-left: auto; display: flex; align-items: center; gap: 8px; }
.sbtn { gap: 3px; color: #444; }
.sbtn svg, .zbtn svg { width: 16px; height: 16px; }
.sbtn:disabled { opacity: .5; }
.filters { margin-right: 5px; }
.levels { margin-right: -2px; }
.cal { font: 700 7px "DejaVu Sans", sans-serif; fill: #555; }
.percent { width: 34px; margin: 0 11px 0 10px; }
.zoom {
  appearance: none;
  width: 88px;
  height: 14px;
  margin: 0 6px;
  background: linear-gradient(#999, #999) center / 100% 1px no-repeat;
}
.zoom::-webkit-slider-thumb {
  appearance: none;
  width: 5px;
  height: 14px;
  border: 1px solid #999;
  background: #e5e5e5;
}
.fit { margin: 0 14px 0 4px; }
.taskedge { flex: none; height: 3px; background: linear-gradient(90deg, #0c0c0c 785px, #444 785px 833px, #0c0c0c 833px); }
```
